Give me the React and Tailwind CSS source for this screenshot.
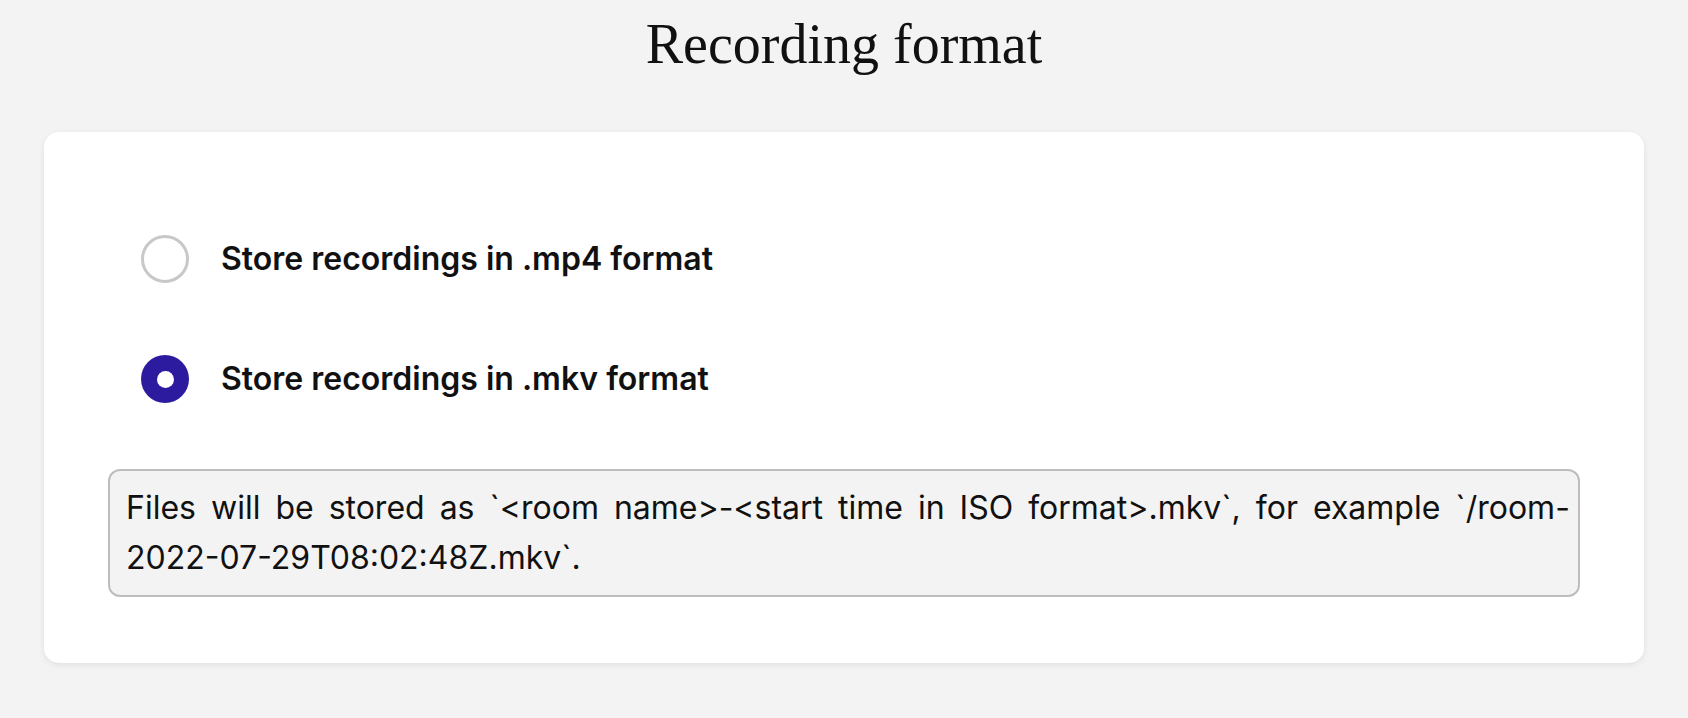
import React, { useState } from 'react'

const formats = [
  { id: 'mp4', label: 'Store recordings in .mp4 format' },
  { id: 'mkv', label: 'Store recordings in .mkv format' },
]

function Radio({ checked }) {
  if (checked) {
    return (
      <span className="flex h-12 w-12 shrink-0 items-center justify-center rounded-full bg-[#2d1b9f]">
        <span className="h-[17px] w-[17px] rounded-full bg-white" />
      </span>
    )
  }
  return <span className="h-12 w-12 shrink-0 rounded-full border-[3px] border-[#c8c8c8] bg-white" />
}

export default function App() {
  const [format, setFormat] = useState('mkv')

  return (
    <div className="min-h-[718px] bg-[#f3f3f3] pt-4 font-['Inter',sans-serif] text-[#111]">
      <h1 className="text-center font-['Liberation_Serif',serif] text-[56px] leading-none font-normal text-[#111]">
        Recording format
      </h1>

      <div className="mx-[44px] mt-[60px] rounded-[15px] bg-white px-16 pt-[103px] pb-[66px] shadow-[0_2px_6px_rgba(0,0,0,0.08)]">
        <div className="flex flex-col gap-[72px] pl-[33px]">
          {formats.map(f => (
            <label
              key={f.id}
              onClick={() => setFormat(f.id)}
              className="flex cursor-pointer items-center gap-8"
            >
              <Radio checked={format === f.id} />
              <span className="text-[32px] leading-none font-semibold">{f.label}</span>
            </label>
          ))}
        </div>

        {/* filename hint */}
        <div className="mt-[66px] rounded-xl border-2 border-[#bdbdbd] bg-[#f3f3f3] px-4 py-[12px] text-[32px] leading-[50px]">
          <p className="whitespace-nowrap [word-spacing:6px]">
            Files will be stored as `&lt;room name&gt;-&lt;start time in ISO format&gt;.{format}`, for example `/room-
          </p>
          <p className="whitespace-nowrap">2022-07-29T08:02:48Z.{format}`.</p>
        </div>
      </div>
    </div>
  )
}
